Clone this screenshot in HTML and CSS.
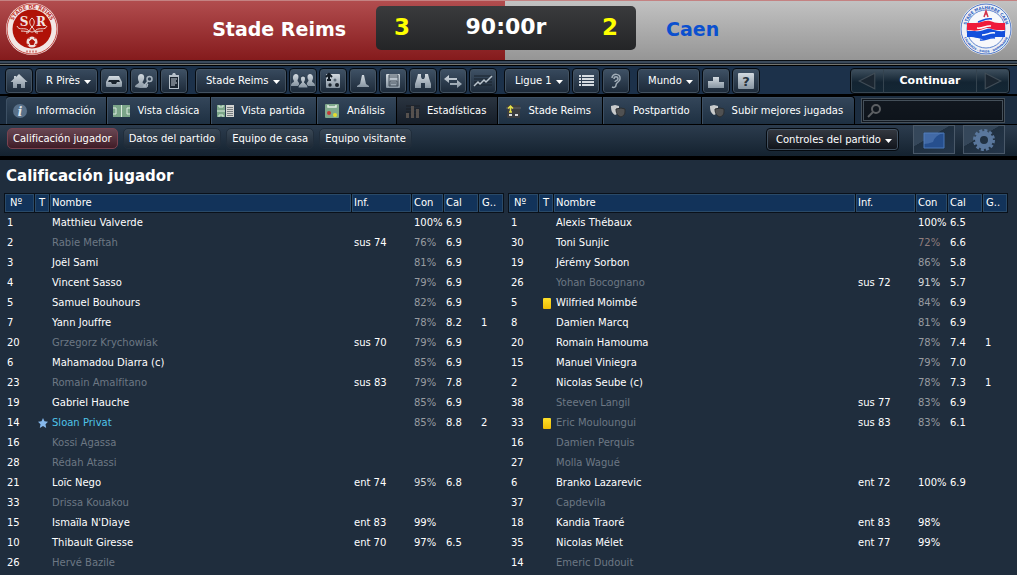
FILE: index.html
```
<!DOCTYPE html>
<html lang="es">
<head>
  <meta charset="UTF-8">
  <title>Calificación jugador</title>
  <link rel="stylesheet" href="styles.css">
</head>
<body>

<!-- shared gradient for the toolbar icons -->
<svg width="0" height="0" aria-hidden="true">
  <linearGradient id="steel" x1="0" y1="0" x2="0" y2="1">
    <stop offset="0" stop-color="#d3dae0"/><stop offset="1" stop-color="#8795a2"/>
  </linearGradient>
</svg>

<header class="match">
  <div class="team home">
    <svg class="crest" viewBox="0 0 52 52" role="img" aria-label="Stade de Reims">
      <circle cx="26" cy="26" r="26" fill="#f2e6e4"/>
      <circle cx="26" cy="26" r="25" fill="none" stroke="#c9504a" stroke-width="1"/>
      <circle cx="26" cy="26" r="19.500" fill="#b01208"/>
      <path id="arc-sr" d="M5.500 26a20.500 20.500 0 0 1 41 0" fill="none"/>
      <text class="crest-red"><textPath href="#arc-sr" startOffset="50%" text-anchor="middle">STADE DE REIMS</textPath></text>
      <text class="crest-letter" x="18" y="23" text-anchor="middle">S</text>
      <text class="crest-letter" x="35" y="23" text-anchor="middle">R</text>
      <path d="M26 15c-3 2-3 6 0 9s3 5 0 5-3-2 0-5 3-7 0-9zM11 23c2 5 7 1 11 4 2 2 1 3-2 3M41 23c-2 5-7 1-11 4-2 2-1 3 2 3M15 28c4 0 6 1 9 0M37 28c-4 0-6 1-9 0" fill="none" stroke="#eed9d5" stroke-width="1"/>
      <circle cx="26" cy="39" r="5.500" fill="#f0dedb"/>
      <path d="M26 36.500l2.500 2-1 3h-3l-1-3zM22 35l2 0M28 35l2 0M21 41l2 1M31 41l-2 1" fill="#b01208" stroke="#b01208" stroke-width="1"/>
      <path d="M20 48.500h12" stroke="#d88580" stroke-width="2" stroke-dasharray="2 1"/>
    </svg>
    <h2>Stade Reims</h2>
  </div>
  <div class="score">
    <b class="goals">3</b>
    <b class="clock">90:00r</b>
    <b class="goals">2</b>
  </div>
  <div class="team away">
    <h2>Caen</h2>
    <svg class="crest" viewBox="0 0 52 52" role="img" aria-label="Stade Malherbe Caen">
      <circle cx="26" cy="26" r="26" fill="#eef0f5"/>
      <circle cx="26" cy="26" r="25" fill="none" stroke="#4f78c8" stroke-width="1"/>
      <circle cx="26" cy="26" r="19" fill="#f7f8fb" stroke="#5f86d0" stroke-width="1"/>
      <path id="arc-top" d="M6 26a20 20 0 0 1 40 0" fill="none"/>
      <path id="arc-bottom" d="M2.500 26a23.500 23.500 0 0 0 47 0" fill="none"/>
      <text class="crest-blue"><textPath href="#arc-top" startOffset="50%" text-anchor="middle">STADE MALHERBE CAEN</textPath></text>
      <text class="crest-blue small"><textPath href="#arc-bottom" startOffset="50%" text-anchor="middle">CALVADOS - BASSE - NORMANDIE</textPath></text>
      <path d="M24 14l2-6 2 6M25 11h2" fill="none" stroke="#d3354d" stroke-width="1.500"/>
      <path d="M7 20h9c5 0 9-3 14-2 4 1 5 2 9 2h6v7h-8c-6 0-8-4-14-1-5 2-9 2-16 1z" fill="#ef1a3a"/>
      <path d="M7 28h8c5 1 8-1 12-2 5-1 7 3 18 2v6h-9c-6 0-9 3-14 2-4-1-8-2-15-2z" fill="#1450dc"/>
      <path d="M18 19c4-1 7-4 14-3M20 37c5 1 9-3 15-2" fill="none" stroke="#1450dc" stroke-width="1.500"/>
      <path d="M17 25c6 1 9-3 14-2M22 32c5 0 8-3 13-2" fill="none" stroke="#fff" stroke-width="1.500"/>
    </svg>
  </div>
</header>

<div class="toolbar">
  <div class="group">
    <button class="btn" aria-label="Inicio"><svg viewBox="0 0 20 18"><path fill="url(#steel)" d="M10 2l8.500 8h-2.500v6h-4v-4H8v4H4v-6H1.500L5 6.500V4h2v1z"/></svg></button>
    <select class="btn pick" aria-label="Mánager"><option>R Pirès</option></select>
    <button class="btn" aria-label="Bandeja de entrada"><svg viewBox="0 0 20 18"><path fill="url(#steel)" d="M5 4h10l3 6v4q0 1-1 1H3q-1 0-1-1v-4z"/><path d="M5 8h10l1 2h-3l-1 2H8l-1-2H4z" fill="#19232d"/></svg></button>
    <button class="btn" aria-label="Contactos"><svg viewBox="0 0 20 18"><path fill="url(#steel)" d="M7 2c4 0 4 5 1.500 8 0 2 4 1.500 4.500 6H6l-5-1c0-3 4-3 4-5C3 6 4 2 7 2z"/><circle cx="15.500" cy="7" r="2.500" fill="none" stroke="#a9b5c0" stroke-width="1.500"/><path d="M14 9l-4 5h4M12 11l2 2" stroke="#a9b5c0" stroke-width="1.500" fill="none"/></svg></button>
    <button class="btn" aria-label="Notas"><svg viewBox="0 0 20 18"><path fill="#b6c0c9" d="M5 3h3l1-2h2l1 2h3v14H5z"/><path fill="#1a2530" d="M6 5h8v11H6z"/><path d="M7 7h6M7 9h5M7 11h6M7 13h4" stroke="#c3ccd4"/></svg></button>
  </div>
  <div class="group">
    <select class="btn pick" aria-label="Club"><option>Stade Reims</option></select>
    <button class="btn" aria-label="Plantilla"><svg class="wide" viewBox="0 0 24 18"><g fill="url(#steel)"><path d="M5 2c3 0 3 4 1.500 6 0 2 2 2 2 6H0c0-4 3-3 3-5C1 6 2 2 5 2z"/><path d="M19 2c-3 0-3 4-1.500 6 0 2-2 2-2 6H24c0-4-3-3-3-5 2-3 1-7-2-7z"/><path d="M12 4c3 0 3 4 1.500 6 0 2 3.500 2 3.500 6H7c0-4 3.500-4 3.500-6C9 8 9 4 12 4z" stroke="#223344" stroke-width="1"/></g></svg></button>
    <button class="btn" aria-label="Tácticas"><svg viewBox="0 0 20 18"><rect x="3" y="2" width="14" height="14" rx="1" fill="url(#steel)"/><path d="M6 8V2M3 5l3-3 3 3M4 8h4" fill="none" stroke="#111a23" stroke-width="2"/><circle cx="7" cy="13" r="1.700" fill="#1a232c"/><circle cx="14" cy="13" r="2" fill="#1a232c"/><circle cx="12" cy="8" r="1.500" fill="#5e6c79"/></svg></button>
    <button class="btn" aria-label="Entrenamiento"><svg viewBox="0 0 20 18"><path fill="url(#steel)" d="M9 3h2l2 9 3 2v1H4v-1l3-2z"/></svg></button>
    <button class="btn" aria-label="Calendario"><svg viewBox="0 0 20 18"><rect x="3" y="2" width="14" height="14" rx="1" fill="url(#steel)"/><path d="M6 3h9v11H6zM6 5h9M7 14V9h7v5M8 11h5" fill="none" stroke="#46535f"/></svg></button>
    <button class="btn" aria-label="Ojeadores"><svg viewBox="0 0 20 18"><path fill="url(#steel)" d="M5 2h3v3l1 2h2l1-2V2h3l1 4 2 6v4h-6v-5H8v5H2v-4l2-6z"/></svg></button>
    <button class="btn" aria-label="Traspasos"><svg viewBox="0 0 20 18"><path fill="url(#steel)" d="M6 3v3h8v2H6v3L1 7zM14 8l5 4-5 4v-3H7v-2h7z"/></svg></button>
    <button class="btn" aria-label="Finanzas"><svg class="wide" viewBox="0 0 22 18"><path d="M2 4h18M2 7h18M2 10h18M2 13h18" stroke="#18222d"/><path d="M2 14l4-4 2 2 4-4 2 2 6-6" fill="none" stroke="#bcc6cf" stroke-width="1.500"/></svg></button>
  </div>
  <div class="group">
    <select class="btn pick" aria-label="Competición"><option>Ligue 1</option></select>
    <button class="btn" aria-label="Clasificación"><svg viewBox="0 0 20 18"><path d="M3 4h2M6 4h12M3 7h2M6 7h12M3 10h2M6 10h12M3 13h2M6 13h12" stroke="#d5dbe0" stroke-width="2"/></svg></button>
    <button class="btn" aria-label="Rumores"><svg viewBox="0 0 20 18"><path d="M6 6c0-5 9-5 8 1 0 3-4 3-4 6 0 2-2 3-4 2M8 7c0-3 4-3 4 0 0 2-3 1-3 3" fill="none" stroke="#a0acb7" stroke-width="1.500"/></svg></button>
  </div>
  <div class="group">
    <select class="btn pick" aria-label="Mundo"><option>Mundo</option></select>
    <button class="btn" aria-label="Palmarés"><svg viewBox="0 0 20 18"><path fill="url(#steel)" d="M2 9h5V5h6v5h5v6H2z"/></svg></button>
    <button class="btn" aria-label="Ayuda"><svg viewBox="0 0 20 18"><rect x="2" y="1" width="16" height="16" rx="1" fill="url(#steel)"/><text class="help" x="10" y="14" text-anchor="middle">?</text></svg></button>
  </div>
  <div class="continue">
    <button aria-label="Atrás"><svg viewBox="0 0 18 18"><path d="M16 2v14L2 9z" fill="#1b2631" stroke="#404c56"/></svg></button>
    <button class="go">Continuar</button>
    <button aria-label="Adelante"><svg viewBox="0 0 18 18"><path d="M2 2v14l14-7z" fill="#1b2631" stroke="#404c56"/></svg></button>
  </div>
</div>

<nav class="tabs">
  <a href="#"><svg viewBox="0 0 18 16"><circle cx="8" cy="8" r="7" fill="#587089"/><text class="info" x="8" y="13" text-anchor="middle">i</text></svg>Información</a>
  <a href="#"><svg viewBox="0 0 18 16"><path fill="#7ba588" d="M0 2h17v12H0z"/><path d="M8.500 2v12M0 5h3v6H0M17 5h-3v6h3" fill="none" stroke="#dcebdf"/></svg>Vista clásica</a>
  <a href="#"><svg viewBox="0 0 18 16"><path fill="#7ba588" d="M0 2h8v12H0z"/><path fill="#d5d5d2" d="M9 2h8v12H9z"/><path d="M0 8h8M2 2v2h4V2M2 14v-2h4v2" fill="none" stroke="#dcebdf"/><path d="M10 4.500h6M10 6.500h6M10 8.500h6M10 10.500h6M10 12.500h6" stroke="#777d80"/></svg>Vista partida</a>
  <a href="#"><svg viewBox="0 0 18 16"><rect x="2" y="1" width="14" height="14" rx="1" fill="#80a98c"/><path d="M5 2v2h8V2" fill="none" stroke="#e3eee5" stroke-width="1.500"/><circle cx="6" cy="10" r="2" fill="#c33a36"/><circle cx="12" cy="12" r="2" fill="#e4de2c"/></svg>Análisis</a>
  <a href="#" class="current"><svg viewBox="0 0 18 16"><path d="M3 3h14M3 6h14M3 9h14M3 12h14" stroke="#1b1f25"/><path fill="#56514e" d="M3 10h3v5H3zM8 3h3v12H8zM13 6h3v9h-3z"/></svg>Estadísticas</a>
  <a href="#"><svg viewBox="0 0 18 16"><rect x="3" y="2" width="13" height="13" rx="1" fill="#3c3d40"/><path d="M2 5h15" stroke="#606368"/><path d="M6.500 9V3M4 5.500L6.500 3 9 5.500M5 9h3" fill="none" stroke="#e6e046" stroke-width="1.500"/><path fill="#ddd" d="M5 11h3v2H5zM11 11h3v2h-3z"/></svg>Stade Reims</a>
  <a href="#"><svg viewBox="0 0 18 16"><path fill="#c9cbcc" d="M2 3l4-1 4 1v4c0 3-2 4-4 5-3-2-4-4-4-9z"/><path fill="#505152" stroke="#2b2e31" d="M7 6l5-1 4 1v3c0 3-2 4-4 5-3-1-5-3-5-8z"/></svg>Postpartido</a>
  <a href="#"><svg viewBox="0 0 18 16"><path fill="#c9cbcc" d="M2 3l4-1 4 1v4c0 3-2 4-4 5-3-2-4-4-4-9z"/><path fill="#505152" stroke="#2b2e31" d="M7 6l5-1 4 1v3c0 3-2 4-4 5-3-1-5-3-5-8z"/></svg>Subir mejores jugadas</a>
  <label class="search"><svg viewBox="0 0 16 16"><circle cx="9" cy="6" r="4" fill="none" stroke="#5c5f63" stroke-width="2"/><path d="M6 9l-5 5" stroke="#5c5f63" stroke-width="2"/></svg><input type="search" aria-label="Buscar"></label>
</nav>

<div class="subnav">
  <button class="pill active">Calificación jugador</button>
  <button class="pill">Datos del partido</button>
  <button class="pill">Equipo de casa</button>
  <button class="pill">Equipo visitante</button>
  <select class="btn pick controls" aria-label="Controles del partido"><option>Controles del partido</option></select>
  <button class="tile" aria-label="Pantalla"><svg viewBox="0 0 24 24"><path fill="#264f8e" stroke="#4a79b8" d="M2 5h20v15H2z"/><path fill="#5d86bd" opacity=".5" d="M2 5h20q-9 2-11 9-5 2-9 2z"/></svg></button>
  <button class="tile" aria-label="Ajustes"><svg viewBox="0 0 24 24"><circle cx="12" cy="12" r="9.500" fill="none" stroke="#5a779c" stroke-width="3" stroke-dasharray="3 1.975"/><circle cx="12" cy="12" r="6.500" fill="none" stroke="#5a779c" stroke-width="5"/></svg></button>
</div>

<main>
  <h1>Calificación jugador</h1>
  <div class="lineups">
    <table>
      <colgroup><col class="c-num"><col class="c-t"><col><col class="c-inf"><col class="c-con"><col class="c-cal"><col class="c-g"></colgroup>
      <thead><tr><th>Nº</th><th>T</th><th>Nombre</th><th>Inf.</th><th>Con</th><th>Cal</th><th>G..</th></tr></thead>
      <tbody>
        <tr><td>1</td><td></td><td>Matthieu Valverde</td><td></td><td class="full">100%</td><td>6.9</td><td></td></tr>
        <tr class="off"><td>2</td><td></td><td>Rabie Meftah</td><td>sus 74</td><td>76%</td><td>6.9</td><td></td></tr>
        <tr><td>3</td><td></td><td>Joël Sami</td><td></td><td>81%</td><td>6.9</td><td></td></tr>
        <tr><td>4</td><td></td><td>Vincent Sasso</td><td></td><td>79%</td><td>6.9</td><td></td></tr>
        <tr><td>5</td><td></td><td>Samuel Bouhours</td><td></td><td>82%</td><td>6.9</td><td></td></tr>
        <tr><td>7</td><td></td><td>Yann Jouffre</td><td></td><td>78%</td><td>8.2</td><td>1</td></tr>
        <tr class="off"><td>20</td><td></td><td>Grzegorz Krychowiak</td><td>sus 70</td><td>79%</td><td>6.9</td><td></td></tr>
        <tr><td>6</td><td></td><td>Mahamadou Diarra (c)</td><td></td><td>85%</td><td>6.9</td><td></td></tr>
        <tr class="off"><td>23</td><td></td><td>Romain Amalfitano</td><td>sus 83</td><td>79%</td><td>7.8</td><td></td></tr>
        <tr><td>19</td><td></td><td>Gabriel Hauche</td><td></td><td>85%</td><td>6.9</td><td></td></tr>
        <tr class="best"><td>14</td><td><svg class="star" viewBox="0 0 10 10"><path d="M5 0l1.500 3.300L10 3.800 7.500 6.200 8.200 10 5 8 1.800 10l.7-3.800L0 3.800l3.500-.5z" fill="#86b8ec"/></svg></td><td>Sloan Privat</td><td></td><td>85%</td><td>8.8</td><td>2</td></tr>
        <tr class="off"><td>16</td><td></td><td>Kossi Agassa</td><td></td><td></td><td></td><td></td></tr>
        <tr class="off"><td>28</td><td></td><td>Rédah Atassi</td><td></td><td></td><td></td><td></td></tr>
        <tr><td>21</td><td></td><td>Loïc Nego</td><td>ent 74</td><td class="high">95%</td><td>6.8</td><td></td></tr>
        <tr class="off"><td>33</td><td></td><td>Drissa Kouakou</td><td></td><td></td><td></td><td></td></tr>
        <tr><td>15</td><td></td><td>Ismaïla N'Diaye</td><td>ent 83</td><td class="full">99%</td><td></td><td></td></tr>
        <tr><td>10</td><td></td><td>Thibault Giresse</td><td>ent 70</td><td class="full">97%</td><td>6.5</td><td></td></tr>
        <tr class="off"><td>26</td><td></td><td>Hervé Bazile</td><td></td><td></td><td></td><td></td></tr>
      </tbody>
    </table>
    <table>
      <colgroup><col class="c-num"><col class="c-t"><col><col class="c-inf"><col class="c-con"><col class="c-cal"><col class="c-g"></colgroup>
      <thead><tr><th>Nº</th><th>T</th><th>Nombre</th><th>Inf.</th><th>Con</th><th>Cal</th><th>G..</th></tr></thead>
      <tbody>
        <tr><td>1</td><td></td><td>Alexis Thébaux</td><td></td><td class="full">100%</td><td>6.5</td><td></td></tr>
        <tr><td>30</td><td></td><td>Toni Sunjic</td><td></td><td class="low">72%</td><td>6.6</td><td></td></tr>
        <tr><td>19</td><td></td><td>Jérémy Sorbon</td><td></td><td>86%</td><td>5.8</td><td></td></tr>
        <tr class="off"><td>26</td><td></td><td>Yohan Bocognano</td><td>sus 72</td><td class="high">91%</td><td>5.7</td><td></td></tr>
        <tr><td>5</td><td><span class="card" title="Amarilla"></span></td><td>Wilfried Moimbé</td><td></td><td>84%</td><td>6.9</td><td></td></tr>
        <tr><td>8</td><td></td><td>Damien Marcq</td><td></td><td>81%</td><td>6.9</td><td></td></tr>
        <tr><td>20</td><td></td><td>Romain Hamouma</td><td></td><td>78%</td><td>7.4</td><td>1</td></tr>
        <tr><td>15</td><td></td><td>Manuel Viniegra</td><td></td><td>79%</td><td>7.0</td><td></td></tr>
        <tr><td>2</td><td></td><td>Nicolas Seube (c)</td><td></td><td>78%</td><td>7.3</td><td>1</td></tr>
        <tr class="off"><td>38</td><td></td><td>Steeven Langil</td><td>sus 77</td><td>83%</td><td>6.9</td><td></td></tr>
        <tr class="off"><td>33</td><td><span class="card" title="Amarilla"></span></td><td>Eric Mouloungui</td><td>sus 83</td><td>83%</td><td>6.1</td><td></td></tr>
        <tr class="off"><td>16</td><td></td><td>Damien Perquis</td><td></td><td></td><td></td><td></td></tr>
        <tr class="off"><td>27</td><td></td><td>Molla Wagué</td><td></td><td></td><td></td><td></td></tr>
        <tr><td>6</td><td></td><td>Branko Lazarevic</td><td>ent 72</td><td class="full">100%</td><td>6.9</td><td></td></tr>
        <tr class="off"><td>37</td><td></td><td>Capdevila</td><td></td><td></td><td></td><td></td></tr>
        <tr><td>18</td><td></td><td>Kandia Traoré</td><td>ent 83</td><td class="full">98%</td><td></td><td></td></tr>
        <tr><td>35</td><td></td><td>Nicolas Mélet</td><td>ent 77</td><td class="full">99%</td><td></td><td></td></tr>
        <tr class="off"><td>14</td><td></td><td>Emeric Dudouit</td><td></td><td></td><td></td><td></td></tr>
      </tbody>
    </table>
  </div>
</main>

</body>
</html>
```
FILE: styles.css
```
* {
  box-sizing: border-box;
}
body {
  margin: 0;
  background: #1f2d3d;
  color: #fff;
  font: 10px/20px "DejaVu Sans", sans-serif;
}
button, select, input {
  font: inherit;
  color: inherit;
  margin: 0;
}
h1, h2 {
  margin: 0;
}
svg {
  display: block;
}

/* match header */
.match {
  display: grid;
  grid-template-columns: 1fr 260px 1fr;
  height: 60px;
  padding-right: 5px;
  background:
    linear-gradient(rgba(255,255,255,.2), rgba(0,0,0,.16)),
    linear-gradient(90deg, #9e2022 calc(50% - 3px), #b2b2b2 calc(50% - 3px));
  border-top: 1px solid #c48282;
}
.team {
  display: flex;
  justify-content: space-between;
  align-items: center;
  padding: 0 30px 4px 6px;
}
.team h2 {
  font-size: 19px;
}
.away {
  padding: 0 0 4px 30px;
}
.away h2 {
  color: #0b50cf;
}
.crest {
  width: 52px;
  height: 52px;
}
.crest-red, .crest-blue {
  font: bold 5px "DejaVu Sans", sans-serif;
  fill: #c0322b;
}
.crest-blue {
  font-size: 4px;
  fill: #2a5cc0;
}
.crest-blue.small {
  font-size: 3px;
}
.crest-letter {
  font: bold 12px "DejaVu Serif", serif;
  fill: #f4e4e1;
}
.score {
  display: flex;
  align-items: center;
  height: 44px;
  margin-top: 5px;
  padding: 0 1px 2px;
  border-radius: 5px;
  background: linear-gradient(#3a3b3d, #242527);
}
.goals {
  width: 50px;
  text-align: center;
  font-size: 23px;
  color: #ff0;
}
.clock {
  flex: 1;
  text-align: center;
  font-size: 22px;
}

/* toolbar */
.toolbar {
  display: flex;
  gap: 7px;
  height: 36px;
  padding: 8px 7px 0 5px;
  border-bottom: 2px solid #000;
  background:
    linear-gradient(#0a0f14 1px, #3b4a5b 1px, #3b4a5b 3px, #1a222c 3px, #1a222c 4px, #74746e 4px, #74746e 5px, #000 5px) top / 100% 6px no-repeat,
    #1c314a;
}
.group {
  display: flex;
  gap: 2px;
}
.btn {
  width: 28px;
  height: 26px;
  padding: 0;
  display: flex;
  align-items: center;
  justify-content: center;
  border: 1px solid #050a10;
  border-radius: 4px;
  background: linear-gradient(#405266, #1c2938);
  box-shadow: inset 0 0 0 1px #435261;
}
.btn svg {
  width: 20px;
  height: 18px;
}
.btn svg.wide {
  width: 24px;
}
.pick {
  appearance: none;
  width: auto;
  padding: 0 17px 0 10px;
  background:
    url("data:image/svg+xml,%3Csvg xmlns='http://www.w3.org/2000/svg' width='7' height='4'%3E%3Cpath d='M0 0h7L3.500 4z' fill='%23fff'/%3E%3C/svg%3E") right 6px top 11px no-repeat,
    linear-gradient(#384a5e, #1c2938);
}
.help {
  font: bold 13px "DejaVu Sans", sans-serif;
  fill: #26323d;
}
.continue {
  display: flex;
  width: 160px;
  height: 26px;
  margin-left: auto;
  border: 1px solid #050a10;
  border-radius: 4px;
  background: linear-gradient(#405160, #132432 55%, #142735);
  box-shadow: inset 0 0 0 1px #384753;
}
.continue button {
  width: 32px;
  padding: 0 6px;
  border: 0;
  background: none;
}
.continue .go {
  flex: 1;
  border: solid #34434f;
  border-width: 0 1px;
  font-size: 11px;
  font-weight: bold;
}

/* tabs */
.tabs {
  display: flex;
  height: 29px;
  padding-left: 6px;
  border-bottom: 1px solid #000;
  background: #1c2d40;
}
.tabs a {
  display: flex;
  align-items: center;
  gap: 6px;
  padding: 0 11px 0 6px;
  border-right: 1px solid #000;
  border-top: 1px solid #000;
  background: linear-gradient(#34465a, #1e3042);
  box-shadow: inset 1px 1px 0 #3d5064;
  color: #fff;
  text-decoration: none;
  white-space: nowrap;
}
.tabs a:first-child {
  border-radius: 4px 0 0 0;
}
.tabs a:nth-child(8) {
  border-radius: 0 4px 0 0;
}
.tabs a.current {
  background: linear-gradient(#2a3440, #161e29);
  box-shadow: none;
}
.tabs svg {
  flex: none;
  width: 18px;
  height: 16px;
}
.info {
  font: italic bold 12px "DejaVu Serif", serif;
  fill: #dfe7ee;
}
.search {
  flex: 1;
  min-width: 0;
  display: flex;
  align-items: center;
  height: 25px;
  margin: 2px 12px 0 6px;
  padding-left: 2px;
  border: 3px double #45505a;
  background: linear-gradient(#11171f, #0e141b);
}
.search input {
  flex: 1;
  min-width: 0;
  height: 16px;
  padding: 0 4px;
  border: 0;
  outline: 0;
  background: none;
}

/* second level */
.subnav {
  display: flex;
  gap: 5px;
  height: 35px;
  padding: 0 9px 0 7px;
  border-bottom: 4px solid #000;
  background: linear-gradient(#2c3c4e, #14222f);
}
.pill {
  height: 21px;
  margin-top: 3px;
  padding: 0 5px;
  border: 1px solid #202d3b;
  border-radius: 5px;
  background: linear-gradient(#3a4856, #1c2835);
  line-height: 18px;
}
.pill.active {
  border-color: #7a4350;
  background: linear-gradient(#694753, #401c27);
}
.controls {
  height: 23px;
  margin: 3px 9px 0 auto;
  padding: 0 17px 0 9px;
  background:
    url("data:image/svg+xml,%3Csvg xmlns='http://www.w3.org/2000/svg' width='7' height='4'%3E%3Cpath d='M0 0h7L3.500 4z' fill='%23fff'/%3E%3C/svg%3E") right 6px top 10px no-repeat,
    linear-gradient(#353941, #0f131a);
}
.tile {
  width: 42px;
  height: 29px;
  margin-right: 3px;
  padding: 0 8px;
  border: 1px solid #4a5969;
  background: linear-gradient(150deg, #35475a 40%, #203040 41%, #25364a);
}
.tile svg {
  width: 24px;
  height: 24px;
}

/* line-ups */
main {
  padding: 0 9px 0 4px;
}
h1 {
  padding: 6px 2px 7px;
  font-size: 15px;
}
.lineups {
  display: grid;
  grid-template-columns: 1fr 1fr;
  gap: 4px;
}
table {
  width: 100%;
  table-layout: fixed;
  border-spacing: 0;
}
.c-num { width: 31px; }
.c-t { width: 15px; }
.c-inf { width: 60px; }
.c-con { width: 32px; }
.c-cal { width: 35px; }
.c-g { width: 25px; }
th {
  height: 20px;
  padding: 0 0 0 2px;
  border: solid #0a111a;
  border-width: 1px 1px 1px 0;
  background: #12335a;
  box-shadow: inset 0 0 0 1px #2a4a68;
  font-weight: normal;
  line-height: 18px;
  text-align: left;
}
th:first-child {
  padding-left: 5px;
  border-left-width: 1px;
}
th:last-child {
  padding-left: 3px;
}
td {
  height: 20px;
  padding: 0 0 0 2px;
  white-space: nowrap;
}
td:first-child {
  padding-left: 3px;
}
th:nth-child(2), td:nth-child(2) {
  padding: 0;
  text-align: center;
}
.off td:nth-child(3) {
  color: #6d7884;
}
.best td:nth-child(3) {
  color: #4fc3e8;
}
td:nth-child(5) {
  color: #989ca1;
}
td.full {
  color: #fff;
}
td.high {
  color: #d3d6d9;
}
td.low {
  color: #8f7d7d;
}
.star {
  width: 10px;
  height: 10px;
  margin: 0 auto;
}
.card {
  display: block;
  width: 8px;
  height: 11px;
  margin: 0 auto;
  border-radius: 1px;
  background: linear-gradient(#ffe02a, #ecbb06);
}
```
